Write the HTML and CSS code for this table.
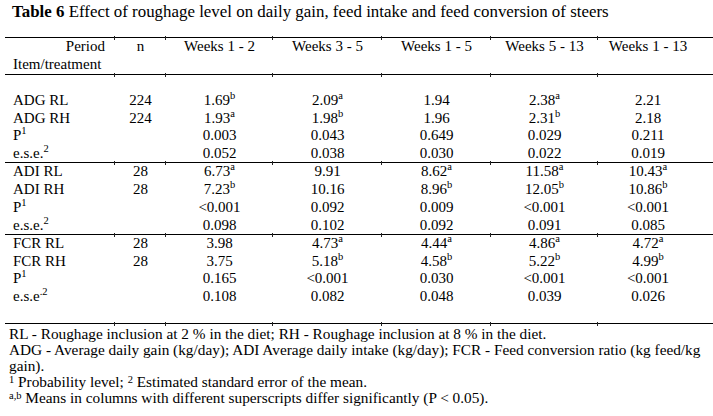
FILE: index.html
```html
<!DOCTYPE html>
<html>
<head>
<meta charset="utf-8">
<link rel="stylesheet" href="styles.css">
</head>
<body>
<div class="title"><b>Table 6</b> Effect of roughage level on daily gain, feed intake and feed conversion of steers</div>
<table class="data">
  <colgroup>
    <col class="c1"><col class="c2"><col class="c3"><col class="c4"><col class="c5"><col class="c6"><col class="c7">
  </colgroup>
  <tbody>
    <tr class="h1 top"><td class="lab per">Period</td><td>n</td><td>Weeks 1 - 2</td><td>Weeks 3 - 5</td><td>Weeks 1 - 5</td><td>Weeks 5 - 13</td><td class="last">Weeks 1 - 13</td></tr>
    <tr class="h2"><td class="lab">Item/treatment</td><td></td><td></td><td></td><td></td><td></td><td class="last"></td></tr>
    <tr class="r17 top"><td class="lab"></td><td></td><td></td><td></td><td></td><td></td><td class="last"></td></tr>
    <tr class="r18"><td class="lab">ADG RL</td><td>224</td><td>1.69<sup>b</sup></td><td>2.09<sup>a</sup></td><td>1.94</td><td>2.38<sup>a</sup></td><td class="last">2.21</td></tr>
    <tr class="r17"><td class="lab">ADG RH</td><td>224</td><td>1.93<sup>a</sup></td><td>1.98<sup>b</sup></td><td>1.96</td><td>2.31<sup>b</sup></td><td class="last">2.18</td></tr>
    <tr class="r18"><td class="lab">P<sup>1</sup></td><td></td><td>0.003</td><td>0.043</td><td>0.649</td><td>0.029</td><td class="last">0.211</td></tr>
    <tr class="r18"><td class="lab">e.s.e.<sup>2</sup></td><td></td><td>0.052</td><td>0.038</td><td>0.030</td><td>0.022</td><td class="last">0.019</td></tr>
    <tr class="r18 top"><td class="lab">ADI RL</td><td>28</td><td>6.73<sup>a</sup></td><td>9.91</td><td>8.62<sup>a</sup></td><td>11.58<sup>a</sup></td><td class="last">10.43<sup>a</sup></td></tr>
    <tr class="r18"><td class="lab">ADI RH</td><td>28</td><td>7.23<sup>b</sup></td><td>10.16</td><td>8.96<sup>b</sup></td><td>12.05<sup>b</sup></td><td class="last">10.86<sup>b</sup></td></tr>
    <tr class="r18"><td class="lab">P<sup>1</sup></td><td></td><td>&lt;0.001</td><td>0.092</td><td>0.009</td><td>&lt;0.001</td><td class="last">&lt;0.001</td></tr>
    <tr class="r18"><td class="lab">e.s.e.<sup>2</sup></td><td></td><td>0.098</td><td>0.102</td><td>0.092</td><td>0.091</td><td class="last">0.085</td></tr>
    <tr class="r18 top"><td class="lab">FCR RL</td><td>28</td><td>3.98</td><td>4.73<sup>a</sup></td><td>4.44<sup>a</sup></td><td>4.86<sup>a</sup></td><td class="last">4.72<sup>a</sup></td></tr>
    <tr class="r17"><td class="lab">FCR RH</td><td>28</td><td>3.75</td><td>5.18<sup>b</sup></td><td>4.58<sup>b</sup></td><td>5.22<sup>b</sup></td><td class="last">4.99<sup>b</sup></td></tr>
    <tr class="r18"><td class="lab">P<sup>1</sup></td><td></td><td>0.165</td><td>&lt;0.001</td><td>0.030</td><td>&lt;0.001</td><td class="last">&lt;0.001</td></tr>
    <tr class="r18"><td class="lab">e.s.e<sup>.2</sup></td><td></td><td>0.108</td><td>0.082</td><td>0.048</td><td>0.039</td><td class="last">0.026</td></tr>
    <tr class="r18 bottom"><td class="lab"></td><td></td><td></td><td></td><td></td><td></td><td class="last"></td></tr>
  </tbody>
</table>
<div class="notes">
  <p>RL - Roughage inclusion at 2 % in the diet; RH - Roughage inclusion at 8 % in the diet.</p>
  <p>ADG - Average daily gain (kg/day); ADI Average daily intake (kg/day); FCR - Feed conversion ratio (kg feed/kg<br>gain).</p>
  <p><sup>1</sup> Probability level; <sup>2</sup> Estimated standard error of the mean.</p>
  <p><sup class="ab">a,b</sup> Means in columns with different superscripts differ significantly (P &lt; 0.05).</p>
</div>
</body>
</html>
```

FILE: styles.css
```css
html, body {
  margin: 0;
  padding: 0;
  background: #fff;
}
body {
  font-family: "Liberation Serif", "Times New Roman", serif;
  font-size: 15px;
  color: #000;
}
.title {
  box-sizing: border-box;
  height: 37px;
  padding: 3px 0 0 12px;
  line-height: 18px;
  font-size: 16.9px;
}
.data {
  margin-left: 5px;
  width: 708px;
  table-layout: fixed;
  border-collapse: collapse;
  border-spacing: 0;
}
.c1 { width: 110px; }
.c2 { width: 51px; }
.c3 { width: 107px; }
.c4 { width: 109px; }
.c5 { width: 109px; }
.c6 { width: 107px; }
.c7 { width: 115px; }
.data td {
  position: relative;
  padding: 0;
  text-align: center;
  white-space: nowrap;
  line-height: 17px;
  vertical-align: middle;
}
.data td.lab {
  text-align: left;
  padding-left: 8px;
}
.data td.per {
  text-align: right;
  padding-right: 10px;
  padding-left: 0;
}
.data td.last {
  padding-right: 15px;
}
.h1 { height: 18px; }
.h2 { height: 19px; }
.r17 { height: 17px; }
.r18 { height: 18px; }
.top td {
  border-top: 1px solid #000;
}
.bottom td {
  border-bottom: 1px solid #000;
}
.top td + td::before {
  content: "";
  position: absolute;
  left: -1px;
  top: -2px;
  width: 1px;
  height: 4px;
  background: #222;
}
.bottom td + td::after {
  content: "";
  position: absolute;
  left: -1px;
  bottom: -3px;
  width: 1px;
  height: 4px;
  background: #222;
}
sup {
  font-size: 10.5px;
  line-height: 0;
  vertical-align: 6px;
}
.notes {
  padding: 2px 0 0 9px;
  font-size: 15.3px;
  line-height: 16px;
}
.notes p {
  margin: 0;
}
.notes sup {
  font-size: 10.5px;
  vertical-align: 4px;
}
```
